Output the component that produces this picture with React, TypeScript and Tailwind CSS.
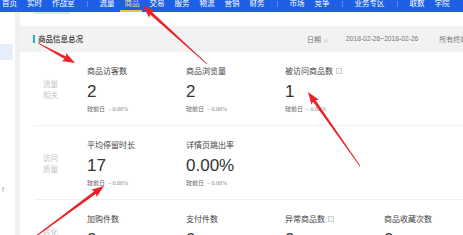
import React from 'react';

type Metric = { title: string; value: string; help?: boolean };

const navItems = [
    '首页', '实时', '作战室', '|', '流量', '商品', '交易', '服务', '物流', '营销', '财务', '|',
    '市场', '竞争', '|', '业务专区', '|', '取数', '学院',
];

const rows: { label: [string, string]; metrics: Metric[] }[] = [
    {
        label: ['流量', '相关'],
        metrics: [
            { title: '商品访客数', value: '2' },
            { title: '商品浏览量', value: '2' },
            { title: '被访问商品数', value: '1', help: true },
        ],
    },
    {
        label: ['访问', '质量'],
        metrics: [
            { title: '平均停留时长', value: '17' },
            { title: '详情页跳出率', value: '0.00%' },
        ],
    },
    {
        label: ['转化', '效果'],
        metrics: [
            { title: '加购件数', value: '0' },
            { title: '支付件数', value: '0' },
            { title: '异常商品数', value: '0', help: true },
            { title: '商品收藏次数', value: '0' },
        ],
    },
];

// red annotation arrows drawn over the screenshot: [tailX, tailY, tipX, tipY]
const arrows: [number, number, number, number][] = [
    [207, 64, 143, 6],
    [38, 43, 75, 63],
    [360, 166, 308, 92],
    [28, 242, 104, 186],
];

const arrowPoints = ([x1, y1, x2, y2]: [number, number, number, number]) => {
    const dx = x2 - x1;
    const dy = y2 - y1;
    const len = Math.hypot(dx, dy);
    const ux = dx / len;
    const uy = dy / len;
    const nx = -uy;
    const ny = ux;
    const head = 11;
    const hw = 4.5;
    const bx = x2 - ux * head;
    const by = y2 - uy * head;
    const pts = [
        [x1 + nx * 0.4, y1 + ny * 0.4],
        [bx + nx * 1.5, by + ny * 1.5],
        [bx + nx * hw - ux * 1.5, by + ny * hw - uy * 1.5],
        [x2, y2],
        [bx - nx * hw - ux * 1.5, by - ny * hw - uy * 1.5],
        [bx - nx * 1.5, by - ny * 1.5],
        [x1 - nx * 0.4, y1 - ny * 0.4],
    ];
    return pts.map((p) => p.join(',')).join(' ');
};

const HelpIcon = () => (
    <span className="ml-[3px] inline-flex h-[6px] w-[6px] items-center justify-center border border-[#cfcfcf] text-[4px] leading-none text-[#aaa]">
        ?
    </span>
);

const App: React.FC = () => {
    return (
        <div className="relative h-[235px] w-[463px] overflow-hidden bg-white font-['Noto_Sans_CJK_SC',sans-serif]">
            {/* Top nav */}
            <nav className="flex h-[12px] items-start gap-[10px] overflow-hidden bg-[#1d5fe5] pl-[2px] text-[7.5px] text-white">
                {navItems.map((item, i) =>
                    item === '|' ? (
                        <span key={i} className="mx-[2px] mt-[1px] h-[6px] w-px shrink-0 bg-[#5b8bef]" />
                    ) : item === '商品' ? (
                        <span key={i} className="relative -mt-[1px] shrink-0 leading-[8px] text-[#f3da8c]">
                            {item}
                            <span className="absolute -left-[5px] -right-[2px] top-[11px] h-[2px] bg-[#e9c43a]" />
                        </span>
                    ) : (
                        <span key={i} className="-mt-[1px] shrink-0 leading-[8px]">
                            {item}
                        </span>
                    )
                )}
            </nav>

            <div className="flex h-[223px]">
                {/* Sidebar */}
                <aside className="relative w-[15px] shrink-0 bg-white">
                    <div className="mt-[32px] h-[16px] w-[13px] bg-[#e6eefc]" />
                    <span className="absolute left-[2px] top-[174px] text-[7px] leading-none text-[#999] font-['Liberation_Sans',sans-serif]">
                        f
                    </span>
                </aside>
                <div className="w-[5px] shrink-0 bg-[#eef0f3]" />

                <main className="min-w-0 flex-1">
                    <div className="h-[14px] bg-white">
                        <div className="ml-[13px] h-[2px] w-[37px] bg-[#dde6f8]" />
                    </div>

                    {/* Section header */}
                    <div className="flex h-[26px] items-center whitespace-nowrap bg-[#f2f2f2] pl-[13px]">
                        <span className="h-[8px] w-[2px] shrink-0 bg-[#1cb5c9]" />
                        <span className="ml-[3px] shrink-0 text-[7.5px] font-medium leading-none text-[#333]">商品信息总况</span>
                        <div className="ml-[224px] flex shrink-0 items-center text-[7px] leading-none text-[#777]">
                            <span>日期</span>
                            <span className="ml-[2px] text-[5px] text-[#aaa]">∨</span>
                            <span className="ml-[18px] font-['Liberation_Sans',sans-serif] text-[6.7px]">
                                2018-02-26~2018-02-26
                            </span>
                            <span className="ml-[21px]">所有终端</span>
                        </div>
                    </div>

                    {/* Metrics card */}
                    <div className="bg-white">
                        {rows.map((row, ri) => (
                            <div
                                key={ri}
                                className="ml-[14px] grid h-[74px] grid-cols-[53px_99px_99px_99px_99px] border-b border-[#efefef]"
                            >
                                <div className="pl-[9px] pt-[26px] text-[7.5px] leading-[11px] text-[#c4c4c4]">
                                    <div>{row.label[0]}</div>
                                    <div>{row.label[1]}</div>
                                </div>
                                {row.metrics.map((m, mi) => (
                                    <div key={mi} className="whitespace-nowrap pt-[12px]">
                                        <div className="flex h-[13px] items-center text-[8px] text-[#444]">
                                            {m.title}
                                            {m.help && <HelpIcon />}
                                        </div>
                                        <div className="mt-[5px] font-['Liberation_Sans',sans-serif] text-[17px] leading-[20px] text-[#333]">
                                            {m.value}
                                        </div>
                                        <div className="mt-[3px] flex items-center text-[6px] leading-[8px] text-[#666]">
                                            <span>较前日</span>
                                            <span className="ml-[3px] font-['Liberation_Serif',serif] text-[#888]">
                                                – 0.00%
                                            </span>
                                        </div>
                                    </div>
                                ))}
                            </div>
                        ))}
                    </div>
                </main>
            </div>

            {/* Annotation arrows */}
            <svg className="pointer-events-none absolute inset-0" width={463} height={235} viewBox="0 0 463 235">
                {arrows.map((a, i) => (
                    <polygon key={i} points={arrowPoints(a)} fill="#ea2228" />
                ))}
            </svg>
        </div>
    );
};

export default App;
